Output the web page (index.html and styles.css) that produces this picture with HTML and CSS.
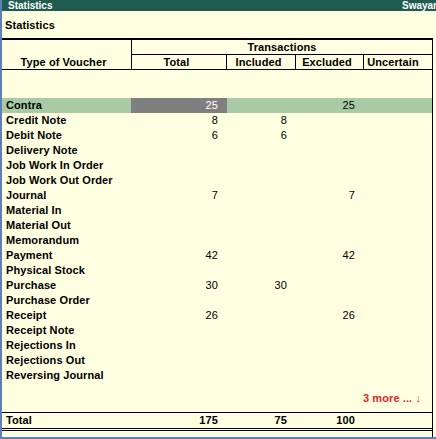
FILE: index.html
```html
<!DOCTYPE html>
<html>
<head>
<meta charset="utf-8">
<link rel="stylesheet" href="styles.css">
</head>
<body>
<div class="window">
  <div class="topbar"><span>Statistics</span><span class="company">Swayam</span></div>
  <div class="title">Statistics</div>
  <div class="panel">
    <div class="head">
      <div class="h-type">Type of Voucher</div>
      <div class="h-trans">Transactions</div>
      <div class="h-sub">Total</div>
      <div class="h-sub">Included</div>
      <div class="h-sub">Excluded</div>
      <div class="h-sub last">Uncertain</div>
    </div>
    <div class="spacer"></div>
    <div class="rows">
      <div class="row sel"><span class="name">Contra</span><span class="num cur">25</span><span class="num"></span><span class="num">25</span><span class="num"></span></div>
      <div class="row"><span class="name">Credit Note</span><span class="num">8</span><span class="num">8</span><span class="num"></span><span class="num"></span></div>
      <div class="row"><span class="name">Debit Note</span><span class="num">6</span><span class="num">6</span><span class="num"></span><span class="num"></span></div>
      <div class="row"><span class="name">Delivery Note</span><span class="num"></span><span class="num"></span><span class="num"></span><span class="num"></span></div>
      <div class="row"><span class="name">Job Work In Order</span><span class="num"></span><span class="num"></span><span class="num"></span><span class="num"></span></div>
      <div class="row"><span class="name">Job Work Out Order</span><span class="num"></span><span class="num"></span><span class="num"></span><span class="num"></span></div>
      <div class="row"><span class="name">Journal</span><span class="num">7</span><span class="num"></span><span class="num">7</span><span class="num"></span></div>
      <div class="row"><span class="name">Material In</span><span class="num"></span><span class="num"></span><span class="num"></span><span class="num"></span></div>
      <div class="row"><span class="name">Material Out</span><span class="num"></span><span class="num"></span><span class="num"></span><span class="num"></span></div>
      <div class="row"><span class="name">Memorandum</span><span class="num"></span><span class="num"></span><span class="num"></span><span class="num"></span></div>
      <div class="row"><span class="name">Payment</span><span class="num">42</span><span class="num"></span><span class="num">42</span><span class="num"></span></div>
      <div class="row"><span class="name">Physical Stock</span><span class="num"></span><span class="num"></span><span class="num"></span><span class="num"></span></div>
      <div class="row"><span class="name">Purchase</span><span class="num">30</span><span class="num">30</span><span class="num"></span><span class="num"></span></div>
      <div class="row"><span class="name">Purchase Order</span><span class="num"></span><span class="num"></span><span class="num"></span><span class="num"></span></div>
      <div class="row"><span class="name">Receipt</span><span class="num">26</span><span class="num"></span><span class="num">26</span><span class="num"></span></div>
      <div class="row"><span class="name">Receipt Note</span><span class="num"></span><span class="num"></span><span class="num"></span><span class="num"></span></div>
      <div class="row"><span class="name">Rejections In</span><span class="num"></span><span class="num"></span><span class="num"></span><span class="num"></span></div>
      <div class="row"><span class="name">Rejections Out</span><span class="num"></span><span class="num"></span><span class="num"></span><span class="num"></span></div>
      <div class="row"><span class="name">Reversing Journal</span><span class="num"></span><span class="num"></span><span class="num"></span><span class="num"></span></div>
    </div>
    <div class="more">3 more ... &#8595;</div>
    <div class="row total"><span class="name">Total</span><span class="num">175</span><span class="num">75</span><span class="num">100</span><span class="num"></span></div>
  </div>
</div>
</body>
</html>
```

FILE: styles.css
```css
html, body {
  margin: 0;
  padding: 0;
  background: #fefee0;
}
body {
  font-family: "Liberation Sans", Arial, sans-serif;
  font-size: 11px;
  letter-spacing: 0.1px;
  color: #000;
}
.window {
  width: 436px;
  height: 439px;
  box-sizing: border-box;
  border-left: 2px solid #5e80b8;
  border-bottom: 2px solid #5e80b8;
  display: flex;
  flex-direction: column;
  overflow: hidden;
}
.topbar {
  height: 11px;
  background: #1f5b4e;
  color: #fff;
  font-weight: bold;
  font-size: 10px;
  line-height: 11px;
  letter-spacing: 0;
  display: flex;
  justify-content: space-between;
  padding-left: 6px;
  overflow: hidden;
  white-space: nowrap;
}
.company {
  margin-right: -6px;
}
.title {
  height: 27px;
  display: flex;
  align-items: center;
  padding-left: 3px;
  font-weight: bold;
  font-size: 11px;
}
.panel {
  flex: 1;
  margin-right: 3px;
  border-right: 1px solid #000;
  display: flex;
  flex-direction: column;
}
.head {
  border-top: 2px solid #000;
  border-bottom: 1px solid #000;
  display: grid;
  grid-template-columns: 130px 95px 69px 68px 68px;
  grid-template-rows: 15px 14px;
  font-weight: bold;
}
.h-type {
  grid-row: 1 / 3;
  grid-column: 1;
  border-right: 1px solid #000;
  display: flex;
  align-items: flex-end;
  justify-content: center;
  line-height: 14px;
  padding-right: 6px;
}
.h-trans {
  grid-column: 2 / 6;
  grid-row: 1;
  border-bottom: 1px solid #000;
  text-align: center;
  line-height: 14px;
}
.h-sub {
  border-right: 1px solid #000;
  text-align: center;
  line-height: 14px;
  padding-right: 5px;
}
.h-sub.last {
  border-right: none;
  padding-right: 10px;
}
.spacer {
  height: 28px;
}
.row {
  display: grid;
  grid-template-columns: 130px 95px 69px 68px 68px;
  height: 15px;
  line-height: 15px;
}
.row .name {
  font-weight: bold;
  padding-left: 4px;
  white-space: nowrap;
}
.row .num {
  text-align: right;
  padding-right: 9px;
}
.row.sel {
  background: #a8cba6;
}
.row .num.cur {
  background: #7f7f7f;
  color: #fff;
  margin-left: -1px;
}
.more {
  height: 29px;
  display: flex;
  align-items: center;
  justify-content: flex-end;
  padding-right: 11px;
  color: #e3262b;
  font-weight: bold;
  border-bottom: 1px solid #000;
}
.row.total {
  font-weight: bold;
  border-bottom: 3px double #000;
}
```
